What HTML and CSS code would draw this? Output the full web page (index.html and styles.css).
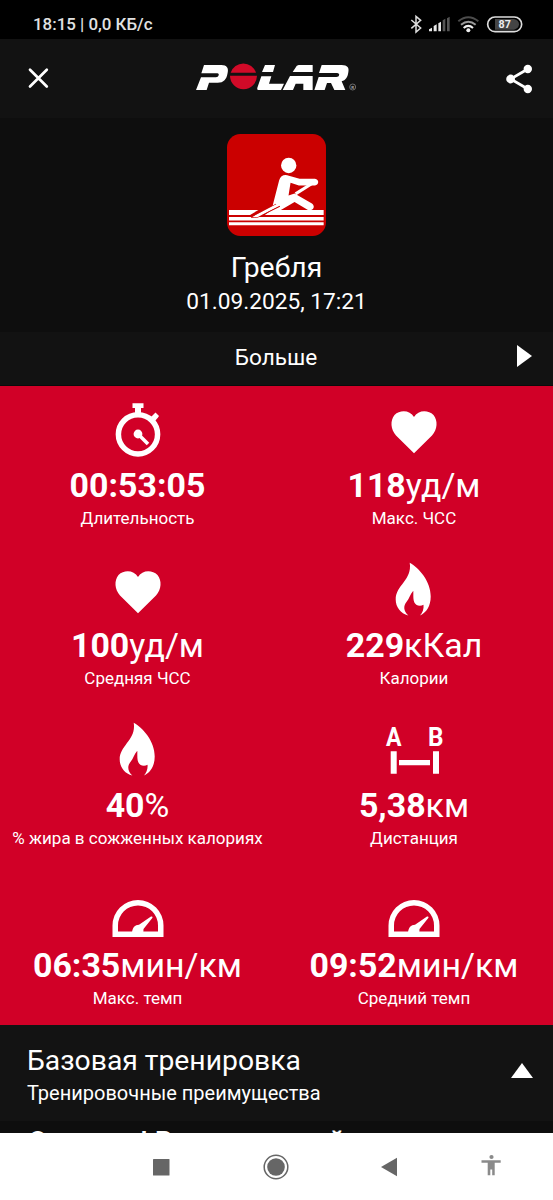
FILE: index.html
```html
<!DOCTYPE html>
<html lang="ru">
<head>
<meta charset="utf-8">
<title>Polar</title>
<link rel="stylesheet" href="styles.css">
</head>
<body>
<svg class="defs" width="0" height="0">
  <symbol id="heart" viewBox="0 0 80 80"><path d="M40 67.200 L22 49.500 C16.500 43.500 16 34.500 20.500 29 C26 23.500 36 24 40 31 C44 24 54 23.500 59.500 29 C64 34.500 63.500 43.500 58 49.500 Z"/></symbol>
  <symbol id="flame" viewBox="0 0 80 80"><path d="M35.700 16.700 C45 22 56.700 35 56.700 50.500 C56.700 60 52.500 66.500 46 69.500 C48.500 66.500 50 63 49.500 58.700 C47.500 60 44.500 60.200 42.300 58.700 C38.500 56 39.500 50 39.300 44.700 C36 48.500 35.500 52 32.800 55.500 C29 60 29.500 65 34.300 69.500 C26.500 67.500 21.700 61 21.700 53.500 C21.700 39 38.500 34 35.700 16.700 Z"/></symbol>
  <symbol id="gauge" viewBox="0 0 80 80"><path fill-rule="evenodd" d="M14.500 71 V59.500 A25.500 25.500 0 0 1 65.500 59.500 V71 Z M20 65.500 H60 V59.500 A20 20 0 0 0 20 59.500 Z"/><path d="M34 67 C34.300 61.500 37 59 41 58.800 L53 50.500 Q54.800 50 54.500 51.800 L45.500 63 L45.300 67 Z"/></symbol>
</svg>

<div class="status">
  <span class="status-text">18:15 | 0,0 КБ/с</span>
  <svg class="status-icons" viewBox="90 42 342 60" fill="none">
    <path d="M94 60 L122 84 L108 96 V49 L122 61 L94 85" stroke="#ddd" stroke-width="4.500"/>
    <path d="M147 94 V88 L156 83 V94 Z M161 94 V78 L170 73 V94 Z M175 94 V70 L183 65 V94 Z" fill="#e8e8e8"/>
    <path d="M188 94 V61 L196 56 V94 Z M201 94 V55 L209 50 V94 Z" fill="#555"/>
    <path d="M235 64 Q265 40 295 64" stroke="#4c4c4c" stroke-width="6"/>
    <path d="M243 74 Q265 56 287 74" stroke="#999" stroke-width="6"/>
    <path d="M251 84 Q265 71 279 84" stroke="#eee" stroke-width="6"/>
    <circle cx="265" cy="91" r="6" fill="#eee"/>
    <rect x="323" y="51" width="102" height="44" rx="22" stroke="#ddd" stroke-width="5"/>
    <path d="M345 57 H402 Q416 60 417 73 Q416 86 402 89 H345 Z" fill="#444"/>
    <text class="battery" x="374" y="84.500" text-anchor="middle">87</text>
  </svg>
</div>

<header class="header">
  <svg class="close" viewBox="0 0 29 29"><path d="M6 5.700 L22.800 22.500 M22.800 5.700 L6 22.500" stroke="#fff" stroke-width="2.700" stroke-linecap="round"/></svg>
  <svg class="logo" viewBox="0 0 555 180">
    <g fill="#fff">
      <path d="M57 45 H109 C126 45 131 55 128 68 C125 88 116 98 98 98 H72 L65 120 H33 L48 82 H93 C101 82 105 70 97 70 H49 Z"/>
      <path d="M240 45 H270 L264 66 H231 Z M229 79 H259 L252 101 H297 L288 120 H222 C217 120 216 117 217 113 Z"/>
      <path d="M341 45 H383 V66 H323 L331 54 Q335 45 341 45 Z M315 78 H383 V120 H355 V101 H332 L324 120 H293 Z"/>
      <path d="M410 45 H470 C488 45 493 54 490 67 C488 82 482 91 470 94 L481 120 H448 L438 99 H426 L419 120 H388 L401 81 H454 C464 81 466 69 456 69 H402 Z"/>
    </g>
    <path d="M137 68 A40 40 0 0 1 213 68 Z M135 77 H216 A40.500 40.500 0 0 1 135 77 Z" fill="#d10a28"/>
    <circle cx="503" cy="111" r="9" fill="none" stroke="#999" stroke-width="2"/>
    <text class="reg" x="503" y="116" text-anchor="middle">R</text>
  </svg>
  <svg class="share" viewBox="0 0 28 30"><path d="M22.800 5 L5.600 15 L22.800 25" fill="none" stroke="#fff" stroke-width="2.800"/><g fill="#fff"><circle cx="22.800" cy="5" r="4.200"/><circle cx="5.600" cy="15" r="4.400"/><circle cx="22.800" cy="25" r="4.200"/></g></svg>
</header>

<section class="sport">
  <svg class="sport-icon" viewBox="171 27 296 305">
    <rect x="171" y="27" width="296" height="305" rx="40" fill="#cb0000"/>
    <g fill="#fff">
      <circle cx="355.500" cy="121" r="23"/>
      <path d="M177 254 H265 L240 269 H177 Z M305 254 H460 V269 H284 Z M177 275 H460 V286 H177 Z M177 291 H460 V300 H177 Z"/>
      <path d="M327 165 C331 151 344 146 356 152 L388 161 H434 C447 163 447 179 434 181 H386 L361 173 L355 211 L373 205 L425 235 C437 244 428 259 413 254 L373 230 L327 257 C312 258 304 249 308 239 Z"/>
    </g>
    <path d="M430 172 L376 206" stroke="#fff" stroke-width="9"/>
    <path d="M318 237 L243 276 H262 L329 243" fill="#fff" stroke="#cb0000" stroke-width="3"/>
    <path d="M318 237 L247 275 L262 276 L334 236 Z" fill="#fff"/>
  </svg>
  <h1 class="sport-name">Гребля</h1>
  <div class="sport-date">01.09.2025, 17:21</div>
</section>

<div class="more">
  <span>Больше</span>
  <svg class="more-arrow" viewBox="0 0 15 22"><path d="M0 0 L15 11 L0 22 Z" fill="#fff"/></svg>
</div>

<main class="stats">
  <div class="stat">
    <svg class="stat-icon" viewBox="0 0 80 80">
      <circle cx="40" cy="48.300" r="19.600" fill="none" stroke="#fff" stroke-width="5.500"/>
      <path d="M34.500 17.300 H45.500 V22 H43 V28 H37 V22 H34.500 Z"/>
      <path d="M53 31 L56.500 27.500 L57.500 26.500 L61 30 L60 31.500 L57 35 Z"/>
      <circle cx="40" cy="48" r="4.400"/>
      <path d="M40 48 L50 58" stroke="#fff" stroke-width="3.600"/>
    </svg>
    <div class="value"><b>00:53:05</b></div>
    <div class="label">Длительность</div>
  </div>
  <div class="stat">
    <svg class="stat-icon"><use href="#heart"/></svg>
    <div class="value"><b>118</b>уд/м</div>
    <div class="label">Макс. ЧСС</div>
  </div>
  <div class="stat">
    <svg class="stat-icon"><use href="#heart"/></svg>
    <div class="value"><b>100</b>уд/м</div>
    <div class="label">Средняя ЧСС</div>
  </div>
  <div class="stat">
    <svg class="stat-icon"><use href="#flame"/></svg>
    <div class="value"><b>229</b>кКал</div>
    <div class="label">Калории</div>
  </div>
  <div class="stat">
    <svg class="stat-icon"><use href="#flame"/></svg>
    <div class="value"><b>40</b>%</div>
    <div class="label">% жира в сожженных калориях</div>
  </div>
  <div class="stat">
    <svg class="stat-icon" viewBox="0 0 80 80">
      <text class="point" x="12" y="39.700" textLength="15.500" lengthAdjust="spacingAndGlyphs">A</text>
      <text class="point" x="54" y="39.700" textLength="15.500" lengthAdjust="spacingAndGlyphs">B</text>
      <path d="M16.700 45.300 H22.700 V67.700 H16.700 Z M59 45.300 H65 V67.700 H59 Z M25 54 H56 V59.300 H25 Z"/>
    </svg>
    <div class="value"><b>5,38</b>км</div>
    <div class="label">Дистанция</div>
  </div>
  <div class="stat">
    <svg class="stat-icon"><use href="#gauge"/></svg>
    <div class="value"><b>06:35</b>мин/км</div>
    <div class="label">Макс. темп</div>
  </div>
  <div class="stat">
    <svg class="stat-icon"><use href="#gauge"/></svg>
    <div class="value"><b>09:52</b>мин/км</div>
    <div class="label">Средний темп</div>
  </div>
</main>

<section class="benefit">
  <div>
    <h2 class="benefit-title">Базовая тренировка</h2>
    <div class="benefit-sub">Тренировочные преимущества</div>
  </div>
  <svg class="benefit-arrow" viewBox="0 0 22 15"><path d="M0 15 L11 0 L22 15 Z" fill="#fff"/></svg>
</section>
<div class="feedback"><p class="feedback-text">Отлично! В ходе данной</p></div>

<nav class="nav">
  <svg viewBox="0 0 30 30"><rect x="8" y="7" width="16.500" height="16.500" rx=".6" fill="#666"/></svg>
  <svg viewBox="0 0 30 30"><circle cx="15" cy="15" r="11.800" fill="none" stroke="#666" stroke-width="1.500"/><circle cx="15" cy="15" r="8.800" fill="#666"/></svg>
  <svg viewBox="0 0 30 30"><path d="M5 15 L21 5.800 V24.200 Z" fill="#666"/></svg>
  <svg viewBox="-1 0 30 30" fill="#8a8a8a"><circle cx="15.500" cy="5" r="2.100"/><path d="M5.500 8.300 H24.700 V10.700 H18.700 V23.300 H16.200 V17.500 H14.300 V23.300 H11.700 V10.700 H5.500 Z"/></svg>
</nav>
</body>
</html>
```
FILE: styles.css
```css
* { box-sizing: border-box; margin: 0; padding: 0; }
body {
  width: 553px;
  height: 1200px;
  overflow: hidden;
  background: #0e0e0e;
  color: #fff;
  font-family: Roboto, "Liberation Sans", sans-serif;
}
svg { display: block; flex: none; }
.defs { position: absolute; }

.status {
  height: 39px;
  padding: 10px 29px 0 33px;
  display: flex;
  justify-content: space-between;
  background: #000;
}
.status-text { font-size: 16.900px; line-height: 29px; font-weight: 500; color: #e2e2e2; }
.status-icons { width: 114px; height: 20px; margin-top: 4px; }
.battery { font: 700 32px Roboto, sans-serif; fill: #eee; }

.header {
  height: 79px;
  display: grid;
  grid-template-columns: 185px 185px 1fr;
  align-items: center;
  background: #121212;
}
.close { width: 29px; height: 29px; margin-left: 24px; }
.logo { width: 185px; height: 60px; margin-top: 2px; }
.reg { font: 700 13px Roboto, sans-serif; fill: #aaa; }
.share { width: 28px; height: 30px; justify-self: end; margin-right: 20px; }

.sport {
  height: 214px;
  padding-top: 16px;
  display: flex;
  flex-direction: column;
  align-items: center;
}
.sport-icon { width: 99px; height: 102px; }
.sport-name { margin-top: 14px; font-size: 28.300px; line-height: 36px; font-weight: 400; }
.sport-date { margin-top: 2px; font-size: 22.700px; line-height: 28px; }

.more {
  height: 54px;
  padding-right: 21px;
  display: grid;
  grid-template-columns: 35px 1fr 15px;
  align-items: center;
  background: #121212;
  border-bottom: 1px solid #0b0b0b;
}
.more span { grid-column: 2; margin-top: -2px; text-align: center; font-size: 22.600px; line-height: 30px; }
.more-arrow { width: 15px; height: 22px; margin-top: -5px; }

.stats {
  height: 639px;
  display: grid;
  grid-template-columns: 275px 278px;
  grid-auto-rows: 160px;
  overflow: hidden;
  background: #d10027;
}
.stat { display: flex; flex-direction: column; align-items: center; white-space: nowrap; }
.stat-icon { width: 80px; height: 80px; fill: #fff; }
.value { font-size: 33.900px; line-height: 40px; }
.value b { font-weight: 700; }
.label { margin-top: 2px; font-size: 17px; line-height: 20px; }
.point { font: 700 26.700px Roboto, sans-serif; }

.benefit {
  height: 96px;
  padding: 17px 20px 0 27px;
  display: flex;
  justify-content: space-between;
  background: #131313;
}
.benefit-title { font-size: 28.300px; line-height: 38px; font-weight: 400; }
.benefit-sub { font-size: 20px; line-height: 26px; }
.benefit-arrow { width: 22px; height: 15px; margin-top: 21px; }

.feedback { height: 12px; padding: 6px 28px 0; overflow: hidden; background: #0e0e0e; }
.feedback-text { font-size: 28.200px; line-height: 30px; font-weight: 500; white-space: nowrap; }

.nav {
  height: 67px;
  padding-left: 145px;
  display: grid;
  grid-template-columns: 116px 115px 99px 30px;
  align-items: center;
  background: #fff;
}
.nav svg { width: 30px; height: 30px; }
```
